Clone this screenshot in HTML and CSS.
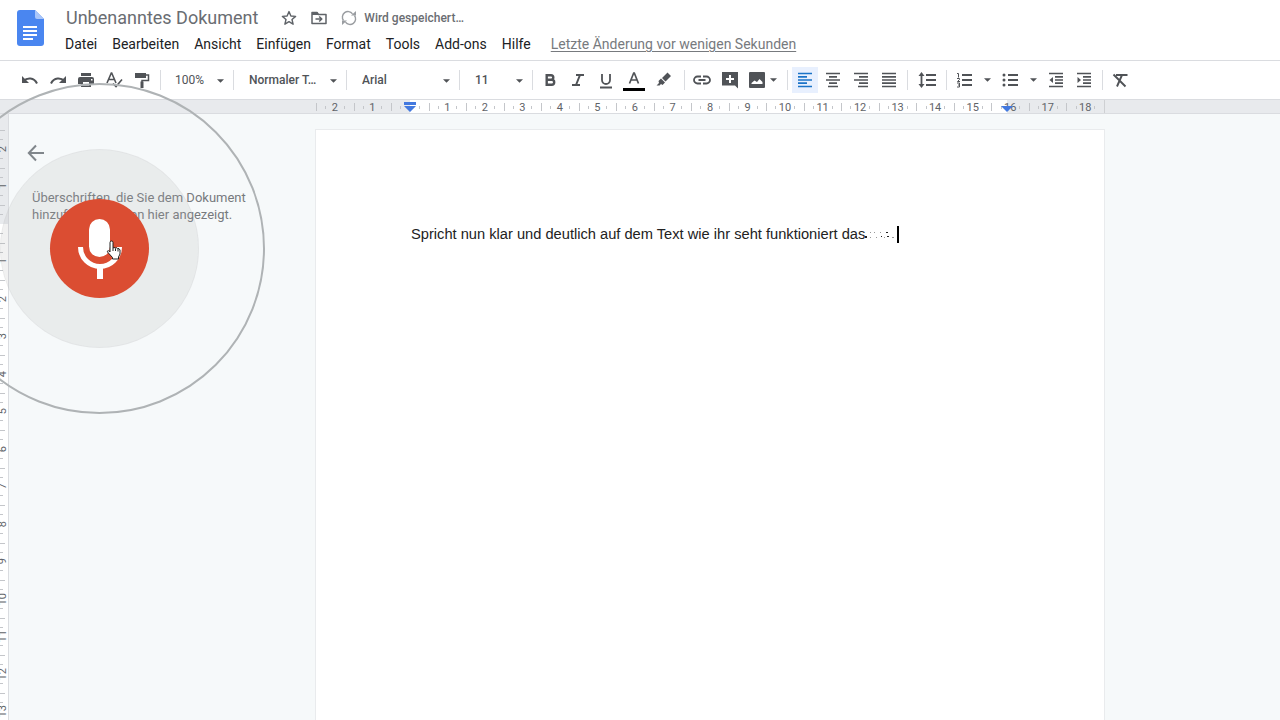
FILE: index.html
```html
<!DOCTYPE html>
<html lang="de">
<head>
<meta charset="utf-8">
<title>Unbenanntes Dokument</title>
<link rel="stylesheet" href="styles.css">
</head>
<body>
<svg class="defs" aria-hidden="true">
  <symbol id="arrow" viewBox="0 0 8 4"><path d="M0 0h8L4 4z"/></symbol>
</svg>
<div class="app">
  <header class="header">
    <svg class="logo" viewBox="0 0 27 36" aria-hidden="true">
      <path fill="#4a86f0" d="M3 0h15l9 9v24a3 3 0 0 1-3 3H3a3 3 0 0 1-3-3V3a3 3 0 0 1 3-3z"/>
      <path fill="#a9c6fa" d="M18 0l9 9h-7a2 2 0 0 1-2-2z"/>
      <path stroke="#fff" stroke-width="2" d="M6 17h14M6 21h14M6 25h14M6 29h10"/>
    </svg>
    <div class="heading">
      <div class="title-row">
        <h1 class="title">Unbenanntes Dokument</h1>
        <button class="mini" aria-label="Markieren"><svg width="16" height="16" viewBox="0 0 16 16"><path fill="none" stroke="#5f6368" stroke-width="1.4" stroke-linejoin="round" d="M8 1.6l1.9 4.4 4.7.4-3.6 3.1 1.1 4.7L8 11.700l-4.100 2.500L5 9.500 1.400 6.400l4.700-.4z"/></svg></button>
        <button class="mini" aria-label="Verschieben"><svg width="16" height="16" viewBox="0 0 16 16"><path fill="none" stroke="#5f6368" stroke-width="1.5" stroke-linejoin="round" d="M1 2.500h5l1.500 2H15v9H1zM4.500 9H10M8.200 6.500L10.800 9l-2.600 2.500"/><path fill="#5f6368" d="M1 2h5l2 3H1z"/></svg></button>
        <span class="saving"><svg width="16" height="16" viewBox="0 0 16 16"><path fill="none" stroke="#9a9da1" stroke-width="1.400" d="M2.500 10.500A5.500 5.500 0 0 1 11.500 3.800M13.500 5.500A5.500 5.500 0 0 1 4.500 12.200"/><path fill="#9a9da1" d="M10 5.500h5V1zM6 10.500H1V15z"/></svg>Wird gespeichert…</span>
      </div>
      <nav class="menu">
        <button>Datei</button><button>Bearbeiten</button><button>Ansicht</button><button>Einfügen</button><button>Format</button><button>Tools</button><button>Add-ons</button><button>Hilfe</button>
        <a href="#">Letzte Änderung vor wenigen Sekunden</a>
      </nav>
    </div>
  </header>

  <div class="toolbar" role="toolbar">
    <button class="tool" aria-label="Rückgängig"><svg viewBox="0 0 18 18"><path fill="none" stroke="currentColor" stroke-width="2" d="M2.500 10C6 6.500 13 6 16 12.500"/><path d="M1 5v7h7z"/></svg></button>
    <button class="tool" aria-label="Wiederholen"><svg viewBox="0 0 18 18"><path fill="none" stroke="currentColor" stroke-width="2" d="M15.500 10C12 6.500 5 6 2 12.500"/><path d="M17 5v7h-7z"/></svg></button>
    <button class="tool" aria-label="Drucken"><svg viewBox="0 0 18 18"><path fill-rule="evenodd" d="M4 2h10v3H4zM3 6h12a2 2 0 0 1 2 2v5h-3v3H4v-3H1V8a2 2 0 0 1 2-2zm3 5v3.500h6V11zm8-3v1.500h1.500V8z"/></svg></button>
    <button class="tool" aria-label="Rechtschreibung"><svg viewBox="0 0 18 18"><path fill="none" stroke="currentColor" stroke-width="1.600" d="M2 12L6.300 2h.400L11 12M3.500 8.500h6M8 12.500l3 3 6-7"/></svg></button>
    <button class="tool" aria-label="Format übertragen"><svg viewBox="0 0 18 18"><path d="M2 2h11v5H2z"/><path fill="none" stroke="currentColor" stroke-width="1.500" d="M12 4h3.500v5.500H9V11"/><path d="M7.500 10.500h3V17h-3z"/></svg></button>
    <span class="sep"></span>
    <span class="pick small"><select aria-label="Zoom"><option>100%</option></select><svg><use href="#arrow"/></svg></span>
    <span class="sep"></span>
    <span class="pick wide"><select aria-label="Formatvorlage"><option>Normaler T…</option></select><svg><use href="#arrow"/></svg></span>
    <span class="sep"></span>
    <span class="pick wide"><select aria-label="Schriftart"><option>Arial</option></select><svg><use href="#arrow"/></svg></span>
    <span class="sep"></span>
    <span class="pick size"><select aria-label="Schriftgröße"><option>11</option></select><svg><use href="#arrow"/></svg></span>
    <span class="sep"></span>
    <button class="tool" aria-label="Fett"><svg viewBox="0 0 18 18"><path fill="none" stroke="currentColor" stroke-width="2.400" d="M5.700 4.200H10a2.300 2.300 0 0 1 0 4.600H5.700zM5.700 8.800h5a2.500 2.500 0 0 1 0 5h-5z"/></svg></button>
    <button class="tool" aria-label="Kursiv"><svg viewBox="0 0 18 18"><path fill="none" stroke="currentColor" stroke-width="2" d="M7 4h8M3 14h8M11 4L7 14"/></svg></button>
    <button class="tool" aria-label="Unterstrichen"><svg viewBox="0 0 18 18"><path fill="none" stroke="currentColor" stroke-width="1.800" d="M5 3v6a4 4 0 0 0 8 0V3M3 16.500h12"/></svg></button>
    <button class="tool" aria-label="Textfarbe"><svg class="tall" viewBox="0 0 22 22"><path fill="none" stroke="currentColor" stroke-width="1.700" d="M6.500 12.500L10.700 2h.600l4.200 10.500M8 9h6"/><path fill="#000" d="M0 17h22v3H0z"/></svg></button>
    <button class="tool pen" aria-label="Markierungsfarbe"><svg viewBox="0 0 18 18"><path d="M12.500 1.500l3.500 3.500-5.500 5.500L7 7zM6 7.500L10 11.500 7.500 14 6 13l-1.500 1.500H1.500L4 12l-.500-2z"/></svg></button>
    <span class="sep"></span>
    <button class="tool" aria-label="Link"><svg viewBox="0 0 18 18"><path fill="none" stroke="currentColor" stroke-width="1.800" d="M8 5.500H4.500a3.500 3.500 0 0 0 0 7H8M10 5.500h3.500a3.500 3.500 0 0 1 0 7H10M5.500 9h7"/></svg></button>
    <button class="tool" aria-label="Kommentar"><svg viewBox="0 0 18 18"><path fill-rule="evenodd" d="M1 1h16v16.500L14 14.500H1zM8 4v3H5v2h3v3h2V9h3V7h-3V4z"/></svg></button>
    <button class="tool image" aria-label="Bild"><svg viewBox="0 0 18 18"><path fill-rule="evenodd" d="M2 1h14a1 1 0 0 1 1 1v14a1 1 0 0 1-1 1H2a1 1 0 0 1-1-1V2a1 1 0 0 1 1-1zM3.500 13h11V11L11.500 8 9 11 6.500 9.500 3.500 12z"/></svg><svg class="arrow"><use href="#arrow"/></svg></button>
    <span class="sep"></span>
    <button class="tool active" aria-label="Linksbündig" aria-pressed="true"><svg viewBox="0 0 18 18"><path stroke="currentColor" stroke-width="1.700" d="M2 2.500h14M2 5.800h9M2 9h14M2 12.200h9M2 15.500h14"/></svg></button>
    <button class="tool" aria-label="Zentriert"><svg viewBox="0 0 18 18"><path stroke="currentColor" stroke-width="1.700" d="M2 2.500h14M5 5.800h8M2 9h14M5 12.200h8M4 15.500h10"/></svg></button>
    <button class="tool" aria-label="Rechtsbündig"><svg viewBox="0 0 18 18"><path stroke="currentColor" stroke-width="1.700" d="M2 2.500h14M7 5.800h9M2 9h14M7 12.200h9M6 15.500h10"/></svg></button>
    <button class="tool" aria-label="Blocksatz"><svg viewBox="0 0 18 18"><path stroke="currentColor" stroke-width="1.700" d="M2 2.500h14M2 5.800h14M2 9h14M2 12.200h14M2 15.500h14"/></svg></button>
    <span class="sep"></span>
    <button class="tool spacing" aria-label="Zeilenabstand"><svg viewBox="0 0 18 18"><path stroke="currentColor" stroke-width="1.800" d="M8 4h10M8 9h10M8 14h10M3.500 4v10"/><path d="M.5 5l3-4 3 4zM.5 13l3 4 3-4z"/></svg></button>
    <span class="sep"></span>
    <button class="tool" aria-label="Nummerierte Liste"><svg viewBox="0 0 18 18"><path stroke="currentColor" stroke-width="1.800" d="M7 4h10M7 9h10M7 14h10"/><path fill="none" stroke="currentColor" d="M2 2.500h1.500v4M2 7.500h2.500v1L2.500 10.500h2.500M2 12h2.500v4H2M3 14h1.500"/></svg></button>
    <button class="tool more" aria-label="Listenoptionen"><svg class="arrow"><use href="#arrow"/></svg></button>
    <button class="tool" aria-label="Aufzählung"><svg viewBox="0 0 18 18"><path stroke="currentColor" stroke-width="1.800" d="M7 4h10M7 9h10M7 14h10"/><circle cx="3" cy="4" r="1.500"/><circle cx="3" cy="9" r="1.500"/><circle cx="3" cy="14" r="1.500"/></svg></button>
    <button class="tool more" aria-label="Aufzählungsoptionen"><svg class="arrow"><use href="#arrow"/></svg></button>
    <button class="tool" aria-label="Einzug verkleinern"><svg viewBox="0 0 18 18"><path stroke="currentColor" stroke-width="1.700" d="M2 2.500h14M8 5.800h8M8 9h8M8 12.200h8M2 15.500h14"/><path d="M6 6v6L2.500 9z"/></svg></button>
    <button class="tool" aria-label="Einzug vergrößern"><svg viewBox="0 0 18 18"><path stroke="currentColor" stroke-width="1.700" d="M2 2.500h14M8 5.800h8M8 9h8M8 12.200h8M2 15.500h14"/><path d="M2.500 6v6L6 9z"/></svg></button>
    <span class="sep"></span>
    <button class="tool" aria-label="Formatierung löschen"><svg viewBox="0 0 18 18"><path fill="none" stroke="currentColor" stroke-width="1.900" d="M5 4h11.500M11 4L6 15.500M2.500 3.500l12 12"/></svg></button>
  </div>

  <div class="ruler">
    <ol class="scale">
      <li>2</li><li>1</li><li></li><li>1</li><li>2</li><li>3</li><li>4</li><li>5</li><li>6</li><li>7</li><li>8</li><li>9</li><li>10</li><li>11</li><li>12</li><li>13</li><li>14</li><li>15</li><li>16</li><li>17</li><li>18</li>
    </ol>
    <svg class="marker start" viewBox="0 0 12 12" aria-hidden="true"><path d="M0 1h12v3H0zM0 5h12L6 11z"/></svg>
    <svg class="marker end" viewBox="0 0 12 12" aria-hidden="true"><path d="M0 5h12L6 11z"/></svg>
  </div>

  <main class="workspace">
    <ol class="side-scale">
      <li><span>2</span></li><li><span>1</span></li><li></li><li><span>1</span></li><li><span>2</span></li><li><span>3</span></li><li><span>4</span></li><li><span>5</span></li><li><span>6</span></li><li><span>7</span></li><li><span>8</span></li><li><span>9</span></li><li><span>10</span></li><li><span>11</span></li><li><span>12</span></li><li><span>13</span></li>
    </ol>
    <aside class="outline">
      <button class="back" aria-label="Gliederung schließen"><svg width="18" height="18" viewBox="0 0 18 18"><path fill="none" stroke="#80868b" stroke-width="2" d="M17 9H2M9 1.500L1.800 9 9 16.500"/></svg></button>
      <p>Überschriften, die Sie dem Dokument hinzufügen, werden hier angezeigt.</p>
    </aside>
    <article class="page"><p>Spricht nun klar und deutlich auf dem Text wie ihr seht funktioniert das<svg width="32" height="12" viewBox="0 0 32 12" aria-hidden="true"><path fill="#222" d="M0 8h2v2H0zM16 8h1v1h-1zM22 8h2v1h-2zM21 4h2v1h-2z"/><path fill="#999" d="M5 4h1v1H5zM5 9h1v1H5zM9 4h1v1H9zM11 9h1v1h-1zM15 4h1v1h-1zM19 9h1v1h-1zM27 9h2v1h-2z"/></svg><span class="caret"></span></p></article>
  </main>

  <div class="voice">
    <span class="halo"></span>
    <span class="ring"></span>
    <button class="mic" aria-label="Spracheingabe"><svg width="46" height="62" viewBox="0 0 46 62"><rect x="12" y="1" width="21" height="38" rx="10.500" fill="#fff"/><path fill="none" stroke="#fff" stroke-width="5" d="M3.500 29a19.500 19.500 0 0 0 39 0"/><path fill="#fff" d="M20 47h6v14h-6z"/></svg></button>
    <svg class="pointer" width="16" height="20" viewBox="0 0 16 20" aria-hidden="true"><path fill="#fff" stroke="#222" stroke-linejoin="round" d="M4 12V2.500a1.500 1.500 0 0 1 3 0V8l1-.500 1.500.500 1-.200 1.200.700 1.300.100 1 1.400V14l-1.500 3v2H6.500v-1.500L1.500 12c-.500-1.500 1-2 2.500 0z"/><path stroke="#222" d="M7 8v3M9.500 8.500V11M12 9v2.500"/></svg>
  </div>
</div>
</body>
</html>
```
FILE: styles.css
```css
* { box-sizing: border-box; }
body { margin: 0; background: #fff; color: #202124; font-family: Roboto, sans-serif; overflow: hidden; }
button, select { border: 0; padding: 0; margin: 0; background: none; font: inherit; color: inherit; }
svg { display: block; }
ol { list-style: none; margin: 0; padding: 0; }
.defs { position: absolute; width: 0; height: 0; }
.app { position: relative; display: flex; flex-direction: column; height: 100vh; overflow: hidden; }

.header { display: flex; flex: none; gap: 21px; height: 61px; padding: 10px 16px 0; border-bottom: 1px solid #dadce0; }
.logo { flex: none; width: 27px; height: 36px; margin-left: 1px; }
.title-row { display: flex; align-items: center; gap: 14px; height: 16px; }
.title { margin: 0 9px 0 1px; font: 400 18px/18px Roboto, sans-serif; color: #6a6d72; white-space: nowrap; }
.saving { display: flex; align-items: center; gap: 7px; font-size: 12px; font-weight: 500; color: #6a6d72; }
.menu { display: flex; gap: 15px; margin-top: 8px; font-size: 14px; line-height: 20px; white-space: nowrap; }
.menu a { margin-left: 5px; color: #777a7e; text-underline-offset: 2px; }

.toolbar { display: flex; flex: none; align-items: center; height: 38px; padding-left: 16px; color: #505357; }
.tool { display: flex; flex: none; align-items: center; justify-content: center; width: 28px; height: 26px; }
.tool svg { width: 18px; height: 18px; fill: currentColor; }
.tool .tall { width: 22px; height: 22px; margin-top: 4px; }
.tool .arrow { width: 7px; height: 4px; }
.tool.pen { width: 32px; }
.tool.image { width: 39px; gap: 4px; padding-right: 2px; }
.tool.spacing { width: 31px; }
.tool.more { width: 18px; }
.tool.active { color: #1a73c8; background: #e8f0fe; background-clip: padding-box; border: solid transparent; border-width: 0 1px; }
.sep { flex: none; width: 1px; height: 20px; margin: 0 3px 0 4px; background: #dadce0; }
.pick { position: relative; flex: none; font-size: 12px; font-weight: 500; }
.pick select { width: 100%; height: 26px; padding-left: 12px; appearance: none; }
.pick svg { position: absolute; right: 5px; top: 12px; width: 7px; height: 4px; fill: currentColor; pointer-events: none; }
.small, .size { width: 65px; }
.wide { width: 105px; }
.small select { padding-left: 11px; font-weight: 400; }

.ruler { position: relative; flex: none; height: 15px; padding: 0 175px 0 316px; border: solid #dadce0; border-width: 1px 0; background: #e8eaed; }
.scale { display: grid; grid-template-columns: repeat(21, 1fr); height: 13px; background: linear-gradient(#fff, #fff) 94px 0 / 597px 100% no-repeat; border-right: 1px solid #ced0d3; }
.scale li { text-align: center; font-size: 11px; line-height: 15px; color: #5f6368; background: linear-gradient(#c4c6ca, #c4c6ca) 0 3px / 1px 8px no-repeat, linear-gradient(#c4c6ca, #c4c6ca) 25% 6px / 1px 3px no-repeat, linear-gradient(#c4c6ca, #c4c6ca) 76% 6px / 1px 3px no-repeat; }
.marker { position: absolute; top: 1px; width: 12px; height: 12px; fill: #4379df; }
.start { left: 404px; }
.end { left: 1001px; }

.workspace { display: flex; flex: 1; min-height: 0; background: #f6f9fa; }
.side-scale { display: grid; flex: none; grid-template-rows: repeat(16, 1fr); width: 9px; height: 616px; padding-top: 16px; border-right: 1px solid #dadce0; background: linear-gradient(#e8eaed 110px, #fff 110px); }
.side-scale li { display: flex; align-items: center; font-size: 11px; color: #5f6368; background: linear-gradient(#c4c6ca, #c4c6ca) 0 0 / 5px 1px no-repeat, linear-gradient(#c4c6ca, #c4c6ca) 0 25% / 3px 1px no-repeat, linear-gradient(#c4c6ca, #c4c6ca) 0 76% / 3px 1px no-repeat; }
.side-scale span { width: 6px; line-height: 6px; writing-mode: vertical-rl; transform: rotate(180deg); }
.outline { flex: 0 0 306px; padding: 30px 54px 0 18px; }
.outline .back { display: block; }
.outline p { margin: 27px 0 0 5px; font-size: 13px; line-height: 17px; color: #777a7e; }
.page { flex: 1; margin: 15px 175px 0 0; padding: 94px 95px 0; background: #fff; border: 1px solid #e9ebed; border-bottom: 0; }
.page p { display: flex; align-items: center; margin: 0; font: 11pt/20px "Liberation Sans", sans-serif; color: #222; white-space: nowrap; }
.caret { width: 2px; height: 17px; background: #000; }

.voice { position: absolute; left: -66px; top: 83px; display: grid; place-items: center; width: 331px; height: 331px; pointer-events: none; }
.halo, .mic, .ring { grid-area: 1 / 1; border-radius: 50%; }
.ring { width: 331px; height: 331px; border: 2px solid #afb3b5; }
.voice { mix-blend-mode: normal; }
.halo { width: 199px; height: 199px; background: rgb(170 170 170 / 16%); border: 1px solid rgb(170 170 170 / 10%); }
.mic { position: relative; display: grid; place-items: center; width: 99px; height: 99px; background: #db4d32; pointer-events: auto; }
.pointer { position: absolute; left: 172px; top: 157px; }
```
